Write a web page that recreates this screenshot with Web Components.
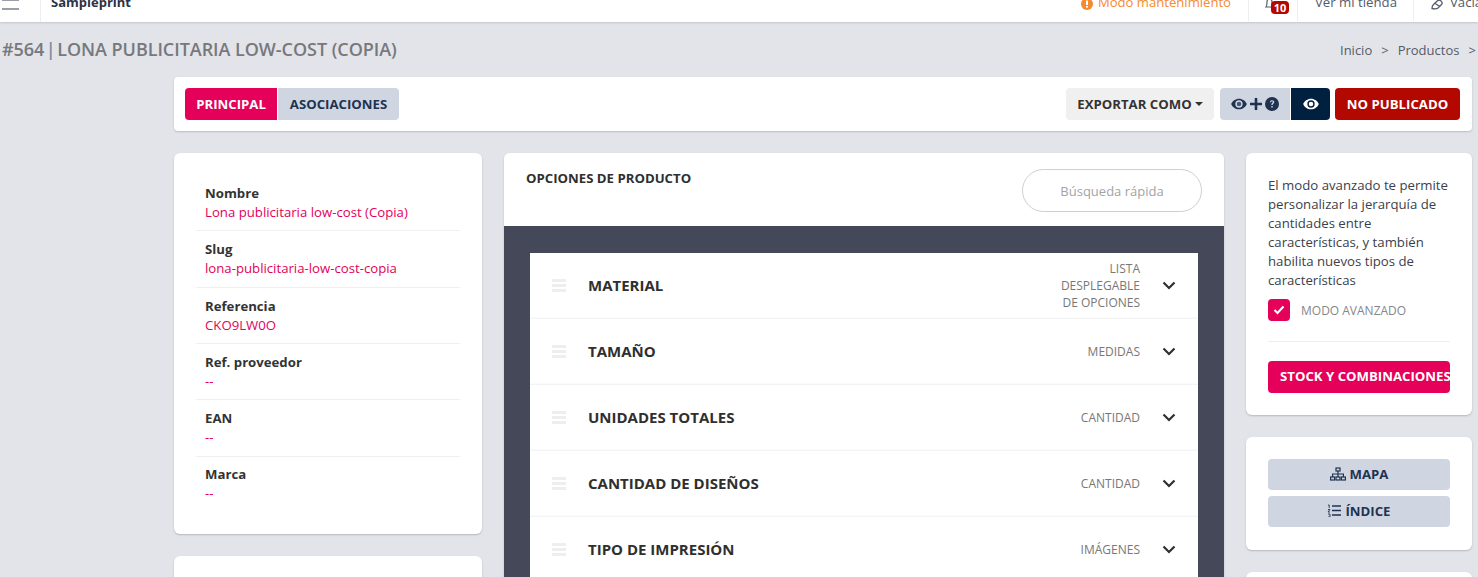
<!DOCTYPE html>
<html lang="es"><head><meta charset="utf-8"><title>Producto</title>
<style>
html,body{margin:0;padding:0;height:577px;overflow:hidden;background:#e2e4ea;font-family:"Open Sans","Noto Sans",sans-serif;font-size:13.2px;color:#333}
</style></head><body>
<admin-page></admin-page>
<script>
function def(name, css, html){
  customElements.define(name, class extends HTMLElement{
    connectedCallback(){
      if(this.shadowRoot) return;
      const r=this.attachShadow({mode:'open'});
      const a=n=>this.getAttribute(n)||'';
      r.innerHTML='<style>'+css+'</style>'+(typeof html==='function'?html(a):html);
    }
  });
}
const eye=(c,i,s=16)=>`<svg width="${s}" height="${s*.75}" viewBox="0 0 24 18"><path fill="${c}" fill-rule="evenodd" d="M12 1C6.500 1 2.200 4.400.2 9c2 4.600 6.300 8 11.800 8s9.800-3.400 11.800-8C21.800 4.400 17.500 1 12 1zm0 13.500A5.500 5.500 0 1 1 12 3.500a5.500 5.500 0 0 1 0 11z"/><circle fill="${i}" cx="12" cy="9" r="3.400"/></svg>`;

def('top-bar',`
:host{display:flex;align-items:stretch;height:22px;background:#fff;box-shadow:0 1px 2px rgba(0,0,0,.14);position:relative;overflow:hidden}
.burger{width:41px;box-sizing:border-box;border-right:1px solid #eceef1;padding-left:2px;display:flex;flex-direction:column;justify-content:flex-start}
.burger i{display:block;width:17px;height:2px;background:#9b9ea6;margin-top:-1px}
.burger i+i{margin-top:7px}
.brand{margin-left:10px;font-weight:700;font-size:13px;color:#2c3345;line-height:12px;margin-top:-4px}
.sp{flex:1}
.warn{display:flex;align-items:flex-start;gap:5px;color:#f58a2e;font-size:13.100px;line-height:12px;margin-top:-4px;padding-right:17px}
.warn svg{margin-top:2px}
.cell{border-left:1px solid #eceef1;position:relative;box-sizing:border-box;height:21px;font-size:13.200px;line-height:12px;color:#555b68}
.bell{width:49px}
.bell svg{position:absolute;left:16px;top:-3px}
.bell b{position:absolute;left:22px;top:1px;width:18px;height:13px;border-radius:4px;background:#b30800;color:#fff;font-size:11px;line-height:13px;text-align:center;font-weight:700}
.shop{width:116px;padding:0 0 0 17px}
.shop span,.empty span{display:block;margin-top:-4px}
.empty{width:65px;padding-left:36px;overflow:hidden;white-space:nowrap}
.empty svg{position:absolute;left:17px;top:-1px}
`,`<div class="burger"><i></i><i></i></div><div class="brand">Sampleprint</div><div class="sp"></div>
<div class="warn"><svg width="12" height="12" viewBox="0 0 12 12"><circle cx="6" cy="6" r="6" fill="#f58a2e"/><rect x="5" y="2.500" width="2" height="4.500" fill="#fff"/><rect x="5" y="8" width="2" height="1.600" fill="#fff"/></svg>Modo mantenimiento</div>
<div class="cell bell"><svg width="9" height="13" viewBox="0 0 9 13"><path d="M1 10c1-1 1-3 1-5s1-3 2.500-3S7 3 7 5s0 4 1 5z" fill="none" stroke="#555b68" stroke-width="1.200"/></svg><b>10</b></div>
<div class="cell shop"><span>Ver mi tienda</span></div>
<div class="cell empty"><svg width="13" height="11" viewBox="0 0 13 11"><path d="M1 9.500c0-2 .5-3 1.500-4L6.500 1.800c1-.9 2.300-.9 3.200 0l.8.8c.9.900.8 2 0 2.900L7 9c-1.200 1-3 1.200-6 .5zM4 4.200l4.500 3.300" fill="none" stroke="#555b68" stroke-width="1.300"/></svg><span>Vaciar</span></div>`);

def('page-head',`
:host{display:flex;align-items:center;justify-content:space-between;height:55px;white-space:nowrap}
h1{margin:-2px 0 0 2px;font-size:18px;font-weight:600;color:#77787b;line-height:24px;letter-spacing:-.05px}
h1 i{font-style:normal;font-weight:600;color:#7c8b9c;margin:0 1.500px}
nav{font-size:13px;color:#555b68;width:138px;overflow:hidden;display:flex;gap:9px}
`,`<h1>#564<i>|</i>LONA PUBLICITARIA LOW-COST (COPIA)</h1><nav><span>Inicio</span><span>&gt;</span><span>Productos</span><span>&gt;</span></nav>`);

def('tool-bar',`
:host{display:flex;align-items:center;justify-content:space-between;height:54px;box-sizing:border-box;padding:0 12px 0 11px;background:#fff;border-radius:4px;box-shadow:0 1px 2px rgba(0,0,0,.18)}
.g{display:flex;align-items:center}
`,`<div class="g"><ui-btn kind="primary" style="width:92px;border-radius:4px 0 0 4px">PRINCIPAL</ui-btn><ui-btn kind="soft" style="width:121px;margin-left:1px;border-radius:0 4px 4px 0">ASOCIACIONES</ui-btn></div>
<div class="g"><ui-btn kind="light" style="width:148px;margin-right:6px">EXPORTAR COMO<svg style="margin-left:3px" width="8" height="4" viewBox="0 0 8 4"><path d="M0 0h8L4 4z" fill="#333"/></svg></ui-btn>
<ui-btn kind="soft" style="width:70px;border-radius:4px 0 0 4px">${eye('#1f3350','#46576f')}<svg style="margin:0 2px" width="14" height="14" viewBox="0 0 14 14"><path d="M5.700 1h2.600v4.700H13v2.600H8.300V13H5.700V8.300H1V5.700h4.700z" fill="#1f3350"/></svg><svg width="14" height="14" viewBox="0 0 14 14"><circle cx="7" cy="7" r="7" fill="#1f3350"/><path d="M4.800 5.300C5 3.900 6 3.200 7.100 3.200c1.300 0 2.200.8 2.200 1.900 0 1.700-1.700 1.500-1.700 3H6.300c0-2.100 1.600-2 1.600-3 0-.5-.4-.8-.9-.8-.6 0-.9.400-1 1z" fill="#d0d7e2"/><rect x="6.300" y="9" width="1.400" height="1.500" fill="#d0d7e2"/></svg></ui-btn>
<ui-btn kind="navy" style="width:39px;margin-left:1px;border-radius:0 4px 4px 0">${eye('#fff','#fff')}</ui-btn>
<ui-btn kind="danger" style="width:125px;margin-left:5px">NO PUBLICADO</ui-btn></div>`);

def('ui-btn',`
:host{display:inline-flex;align-items:center;justify-content:center;height:32px;box-sizing:border-box;border-radius:4px;font-size:13.200px;font-weight:700;white-space:nowrap;overflow:hidden}
:host([kind=primary]){background:#e5005a;color:#fff}
:host([kind=soft]){background:#cfd6e2;color:#1f3350}
:host([kind=light]){background:#f0f0f1;color:#333}
:host([kind=navy]){background:#00203f;color:#fff}
:host([kind=danger]){background:#b30800;color:#fff}
`,`<slot></slot>`);

def('info-row',`
:host{display:block;box-sizing:border-box;height:56.300px;padding:8.800px 0 0 9px;border-bottom:1px solid #eff0f2;line-height:19px}
:host(:last-child){border-bottom:0}
b{display:block;font-weight:700;color:#333;font-size:13.200px}
span{display:block;color:#e5005a;font-size:13.200px}
`,a=>`<b>${a('label')}</b><span>${a('value')}</span>`);

def('ui-card',`
:host{display:block;background:#fff;border-radius:6px;box-shadow:0 1px 2px rgba(0,0,0,.2);box-sizing:border-box}
`,`<slot></slot>`);

def('option-row',`
:host{display:flex;align-items:center;height:66px;box-sizing:border-box;background:#fff;padding:0 22px 0 22px;border-bottom:1px solid #f3f3f4;box-shadow:inset 0 -3px 3px -3px rgba(0,0,0,.05);flex:none}
.h{width:14px;height:13px;display:flex;flex-direction:column;justify-content:space-between;margin-right:22px}
.h i{display:block;height:3px;background:#eeeeef}
b{font-size:15px;font-weight:700;color:#2f2f2f;flex:1;margin-bottom:2px}
span{font-size:12px;line-height:17px;color:#777;text-align:right;width:90px;margin-right:22px}
svg{flex:none}
`,a=>`<div class="h"><i></i><i></i><i></i></div><b>${a('name')}</b><span>${a('type')}</span><svg width="14" height="9" viewBox="0 0 14 9"><path d="M1.500 1.500 7 7l5.500-5.500" fill="none" stroke="#2f2f2f" stroke-width="2.200"/></svg>`);

def('admin-page',`
:host{display:block;height:577px;overflow:hidden;position:relative}
.wrap{padding-left:174px;padding-right:6px}
.cols{display:grid;grid-template-columns:308px 720px 226px;column-gap:22px;margin-top:22px}
.col{display:flex;flex-direction:column;gap:22px}
.left{padding:22.150px 22px 0;height:381px}
.center{overflow:hidden;border-radius:6px 6px 0 0}
.chead{height:73px;display:flex;justify-content:space-between;padding:16px 22px 0 22px;box-sizing:border-box;background:#fff}
.chead b{font-size:13.200px;color:#2f2f2f;line-height:18px}
.search{width:180px;height:43px;border:1px solid #cfcfd1;border-radius:22px;text-align:center;line-height:42px;color:#a3a3a6;font-size:13px;box-sizing:border-box}
.dark{background:#454859;padding:27px 26px 0;display:flex;flex-direction:column;height:400px}
.right1{padding:23px 22px 22px;height:262px}
p{margin:0;font-size:13.200px;line-height:19px;color:#3a3f4b}
.chk{display:flex;align-items:center;gap:11px;margin-top:9px;font-size:12px;color:#85878c}
.box{width:22px;height:22px;border-radius:4px;background:#e5005a;display:flex;align-items:center;justify-content:center}
hr{border:0;border-top:1px solid #eceef1;margin:20px 0 19px}
.stock{justify-content:flex-start;padding:0 0 2px 12px;width:182px;display:flex}
.right2{padding:22px;height:113px;display:flex;flex-direction:column;gap:6px}
.right2 ui-btn{width:182px;height:31px;padding-bottom:2px}
.right2 svg{margin-right:4px}
.stub{height:60px}
`,`<top-bar></top-bar>
<page-head></page-head>
<div class="wrap"><tool-bar></tool-bar>
<div class="cols">
<div class="col"><ui-card class="left">
<info-row label="Nombre" value="Lona publicitaria low-cost (Copia)"></info-row>
<info-row label="Slug" value="lona-publicitaria-low-cost-copia"></info-row>
<info-row label="Referencia" value="CKO9LW0O"></info-row>
<info-row label="Ref. proveedor" value="--"></info-row>
<info-row label="EAN" value="--"></info-row>
<info-row label="Marca" value="--"></info-row>
</ui-card><ui-card class="stub"></ui-card></div>
<div class="col"><ui-card class="center"><div class="chead"><b>OPCIONES DE PRODUCTO</b><div class="search">Búsqueda rápida</div></div>
<div class="dark">
<option-row name="MATERIAL" type="LISTA DESPLEGABLE DE OPCIONES"></option-row>
<option-row name="TAMAÑO" type="MEDIDAS"></option-row>
<option-row name="UNIDADES TOTALES" type="CANTIDAD"></option-row>
<option-row name="CANTIDAD DE DISEÑOS" type="CANTIDAD"></option-row>
<option-row name="TIPO DE IMPRESIÓN" type="IMÁGENES"></option-row>
</div></ui-card></div>
<div class="col"><ui-card class="right1"><p>El modo avanzado te permite personalizar la jerarquía de cantidades entre características, y también habilita nuevos tipos de características</p>
<div class="chk"><span class="box"><svg width="12" height="10" viewBox="0 0 12 10"><path d="M1.500 5 4.500 8l6-6.500" fill="none" stroke="#fff" stroke-width="2"/></svg></span>MODO AVANZADO</div><hr>
<ui-btn kind="primary" class="stock">STOCK Y COMBINACIONES</ui-btn></ui-card>
<ui-card class="right2"><ui-btn kind="soft"><svg width="16" height="14" viewBox="0 0 16 14"><g fill="none" stroke="#1f3350" stroke-width="1.200"><rect x="6" y="1" width="4" height="3"/><rect x=".6" y="10" width="4" height="3"/><rect x="6" y="10" width="4" height="3"/><rect x="11.400" y="10" width="4" height="3"/><path d="M8 4v6M2.600 10V7h10.800v3"/></g></svg>MAPA</ui-btn>
<ui-btn kind="soft"><svg width="14" height="13" viewBox="0 0 14 13"><g fill="none" stroke="#1f3350" stroke-width="1.300"><path d="M5 2h9M5 6.500h9M5 11h9"/><path d="M1 1h1.200v3M1 5.500h2L1 8h2M1 10h2v3H1" stroke-width=".9"/></g></svg>ÍNDICE</ui-btn></ui-card>
<ui-card class="stub"></ui-card></div>
</div></div>`);
</script>
</body></html>
